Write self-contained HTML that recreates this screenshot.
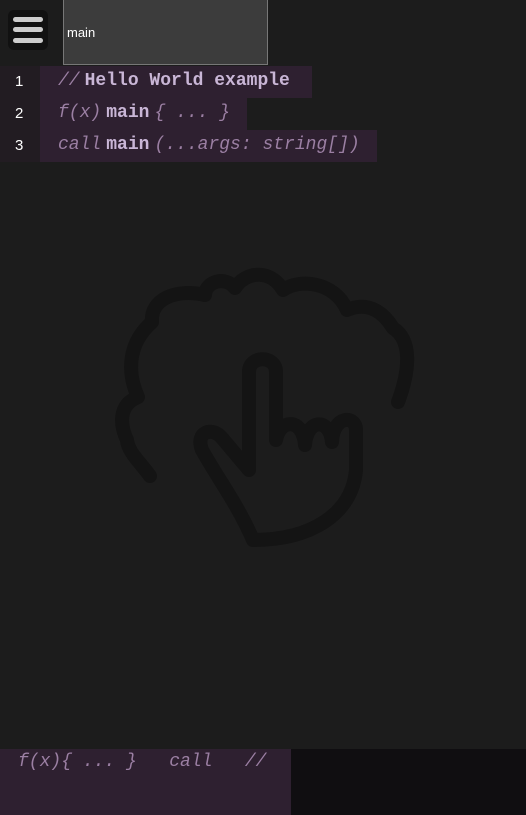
<!DOCTYPE html>
<html><head><meta charset="utf-8"><style>
body{margin:0;width:526px;height:815px;background:#1c1c1c;position:relative;overflow:hidden;font-family:"Liberation Mono",monospace}
.menu{position:absolute;left:8px;top:10px;width:40px;height:40px;background:#111;border-radius:6px}
.menu i{position:absolute;left:5px;width:30px;height:5px;background:#ccc;border-radius:3px}
.tab{position:absolute;left:63px;top:-1px;width:203px;height:65px;background:#3c3c3c;border:1px solid #777;border-top:none;font-family:"Liberation Sans",sans-serif;font-size:13px;color:#fff}
.tab span{position:absolute;left:3px;top:26px}
.gut{position:absolute;left:0;top:66px;width:40px;height:96px;background:#221c22}
.ln{position:absolute;left:15px;color:#fff;font-family:"Liberation Sans",sans-serif;font-size:15px}
.row{position:absolute;left:40px;height:32px;background:#2e2030;font-size:18px;line-height:30px;white-space:pre;color:#9b7fa3;padding-left:18px;box-sizing:border-box}
.row i{font-style:italic;margin-right:5px}
.row b{color:#c9b6d6;margin-right:5px}
.bot{position:absolute;left:0;top:749px;width:291px;height:66px;background:#2e2030;color:#9b7fa3;font-style:italic;font-size:18px;white-space:pre;padding-left:18px;box-sizing:border-box;line-height:26px}
.bot2{position:absolute;left:291px;top:749px;width:235px;height:66px;background:#100e11}
</style></head><body>
<div class="menu"><i style="top:7px"></i><i style="top:17px"></i><i style="top:28px"></i></div>
<div class="tab"><span>main</span></div>
<div class="gut"></div>
<div class="ln" style="top:73px">1</div><div class="ln" style="top:105px">2</div><div class="ln" style="top:137px">3</div>
<div class="row" style="top:66px;width:272px"><i>//</i><b>Hello World example</b></div>
<div class="row" style="top:98px;width:207px"><i>f(x)</i><b>main</b><i>{ ... }</i></div>
<div class="row" style="top:130px;width:337px"><i>call</i><b>main</b><i>(...args: string[])</i></div>
<svg style="position:absolute;left:0;top:0" width="526" height="815" fill="none" stroke="#141414" stroke-width="14" stroke-linecap="round" stroke-linejoin="round">
<path d="M150,476 C140,462 128,452 127,440 C120,425 118,405 138,397 C128,375 126,345 152,322 C150,300 175,288 205,295 C205,282 225,275 235,288 C245,272 270,268 283,290 C300,278 335,282 347,310 C370,300 385,315 393,328 C412,340 410,370 398,402"/>
<path d="M276,440 L276,372 C276,355 249,355 249,372 L249,470 L222,438 C212,426 195,432 202,450 C220,482 238,505 253,540 C310,540 352,515 356,470 L356,430 C356,415 333,415 332,442 C330,418 307,418 305,445 C303,418 280,418 276,440"/>
</svg>
<div class="bot">f(x){ ... }   call   //</div>
<div class="bot2"></div>
</body></html>
